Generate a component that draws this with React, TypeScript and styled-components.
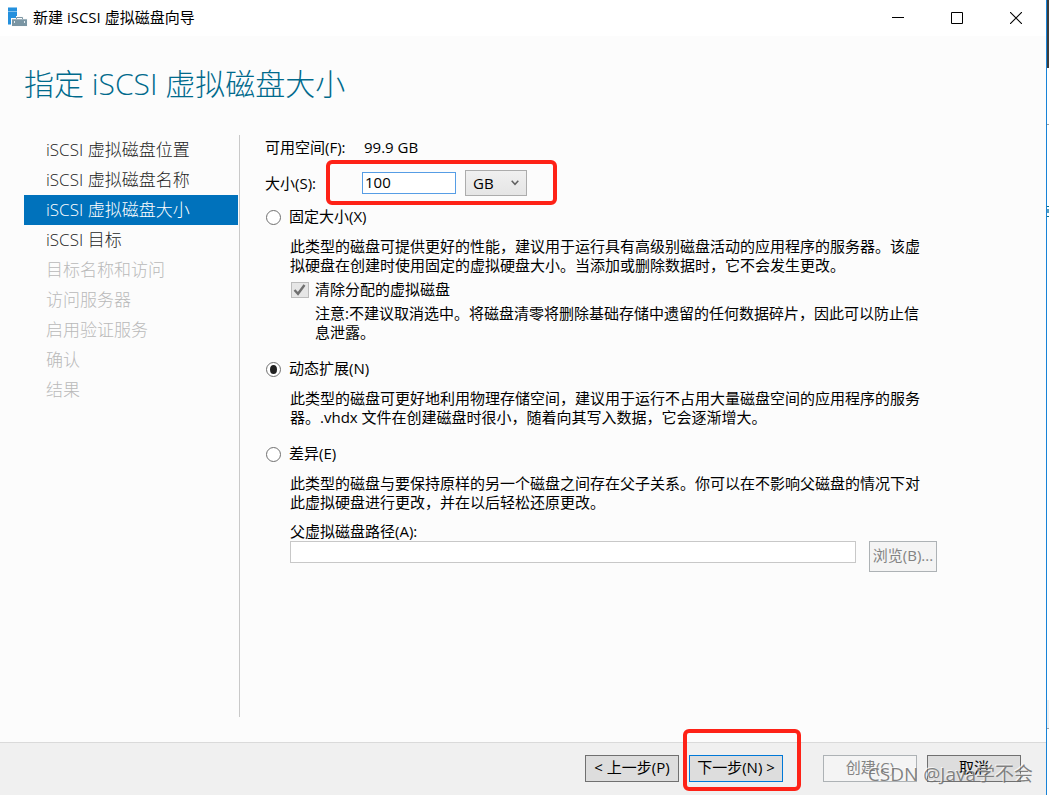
import React, { useState } from "react";
import styled, { createGlobalStyle, css } from "styled-components";

const GlobalStyle = createGlobalStyle`
  *, *::before, *::after { box-sizing: border-box; }
  body {
    margin: 0;
    background: #ffffff;
    color: #000000;
    font-family: "Open Sans", "Noto Sans CJK SC", sans-serif;
    font-size: 15px;
    line-height: 19px;
    text-spacing-trim: space-all;
    text-autospace: no-autospace;
  }
  button, input, select { font: inherit; color: inherit; margin: 0; }
`;

const Screen = styled.div`
  display: flex;
  min-height: 100vh;
`;

const Window = styled.div`
  flex: 1;
  min-width: 0;
  display: flex;
  flex-direction: column;
  background: #fcfcfc;
  border-right: 1px solid #1883d7;
`;

const Backdrop = styled.div`
  width: 2px;
  display: flex;
  flex-direction: column;
  background: #ffffff;
`;

const BackdropBar = styled.div<{ $height: number; $color: string }>`
  height: ${(p) => p.$height}px;
  background: ${(p) => p.$color};
`;

const TitleBar = styled.header`
  display: flex;
  align-items: center;
  height: 36px;
  padding: 0 1px 0 8px;
  background: #ffffff;
`;

const WindowTitle = styled.span`
  flex: 1;
  padding: 0 0 2px 5px;
`;

const CaptionButton = styled.button`
  display: flex;
  align-items: center;
  justify-content: center;
  width: 59px;
  height: 34px;
  padding: 0;
  border: 0;
  background: transparent;
`;

const Heading = styled.h1`
  margin: 0;
  padding: 28px 24px 31px;
  font-size: 30px;
  line-height: 40px;
  font-weight: 300;
  color: #006a8c;
`;

const Body = styled.div`
  flex: 1;
  display: flex;
  padding: 0 24px 25px;
`;

const Steps = styled.nav`
  flex: 0 0 216px;
  padding-right: 1px;
  border-right: 1px solid #c9c9c9;
`;

const StepList = styled.ol`
  margin: 0;
  padding: 0;
  list-style: none;
`;

const StepButton = styled.button<{ $current?: boolean }>`
  display: block;
  width: 100%;
  height: 30px;
  padding: 0 22px;
  border: 0;
  background: ${(p) => (p.$current ? "#0072bc" : "transparent")};
  color: ${(p) => (p.$current ? "#ffffff" : "#1e1e1e")};
  font-size: 17px;
  font-weight: 300;
  line-height: 28px;
  text-align: left;
  &:disabled { color: #b9b9b9; }
`;

const Form = styled.form`
  flex: 1;
  min-width: 0;
  max-width: 697px;
  padding: 2px 0 0 25px;
`;

const SpaceField = styled.div`
  display: flex;
  align-items: center;
  height: 20px;
`;

const SizeField = styled.div`
  position: relative;
  display: flex;
  align-items: center;
  height: 48px;
  margin-top: 2px;
`;

const FieldLabel = styled.label`
  width: 97px;
`;

const FieldName = styled.span`
  width: 99px;
`;

const SizeInput = styled.input`
  width: 94px;
  height: 22px;
  padding: 0 2px 2px;
  border: 1px solid #569de5;
  background: #ffffff;
  outline: 0;
`;

const UnitPicker = styled.div`
  display: grid;
  align-items: center;
  width: 62px;
  margin-left: 9px;
  & > * { grid-area: 1 / 1; }
  svg { justify-self: end; margin-right: 8px; pointer-events: none; }
`;

const UnitSelect = styled.select`
  appearance: none;
  width: 100%;
  height: 26px;
  padding: 0 7px;
  border: 1px solid #acacac;
  border-radius: 0;
  background: linear-gradient(#f0f0f0, #e5e5e5);
`;

const outline = css`
  position: absolute;
  border: 4px solid #fe2217;
  border-radius: 6px;
  pointer-events: none;
`;

const SizeMarker = styled.span`
  ${outline}
  inset: 1px auto 2px 61px;
  width: 231px;
`;

const NextMarker = styled.span`
  ${outline}
  inset: -26px -18px -9px -6px;
`;

const Option = styled.section`
  padding-bottom: 17px;
`;

const Choice = styled.label`
  display: flex;
  align-items: center;
  gap: 8px;
  height: 21px;
  padding-left: 1px;
`;

const ChoiceText = styled.span`
  padding-bottom: 2px;
`;

const Radio = styled.input`
  appearance: none;
  display: grid;
  place-items: center;
  width: 15px;
  height: 15px;
  border: 1px solid #707070;
  border-radius: 50%;
  background: #ffffff;
  &:checked::before {
    content: "";
    width: 7px;
    height: 9px;
    border-radius: 50%;
    background: #212121;
  }
`;

const Details = styled.div`
  padding: 9px 0 0 25px;
`;

const Text = styled.p`
  max-width: 632px;
  margin: 0;
`;

const CheckRow = styled.label`
  display: flex;
  align-items: center;
  gap: 6px;
  height: 29px;
  padding-left: 1px;
`;

const CheckControl = styled.span`
  display: grid;
  & > * { grid-area: 1 / 1; }
`;

const Checkbox = styled.input`
  appearance: none;
  width: 18px;
  height: 16px;
  border: 1px solid #bcbcbc;
  background: #e6e6e6;
`;

const Note = styled.p`
  max-width: 632px;
  margin: 0;
  padding-left: 25px;
`;

const PathLabel = styled.label`
  display: block;
  padding-top: 10px;
`;

const PathRow = styled.div`
  display: flex;
  align-items: flex-start;
  gap: 13px;
`;

const PathInput = styled.input`
  flex: 1;
  min-width: 0;
  height: 22px;
  border: 1px solid #c8c8c8;
  background: #ffffff;
`;

const Button = styled.button<{ $primary?: boolean }>`
  width: 94px;
  height: 27px;
  padding: 0 0 2px;
  border: 1px solid ${(p) => (p.$primary ? "#0078d7" : "#707070")};
  background: #dddddd;
  white-space: nowrap;
  &:disabled {
    border-color: #adb2b5;
    background: #f4f4f4;
    color: #838383;
  }
`;

const BrowseButton = styled(Button)`
  width: 68px;
  height: 31px;
`;

const Footer = styled.footer`
  position: relative;
  display: flex;
  align-items: flex-start;
  justify-content: flex-end;
  gap: 10px;
  height: 53px;
  padding: 12px 25px 0;
  border-top: 1px solid #dadada;
  background: #f0f0f0;
`;

const NextSlot = styled.div`
  position: relative;
  display: flex;
  margin-right: 30px;
`;

const Watermark = styled.span`
  position: absolute;
  right: 13px;
  bottom: 9px;
  font-size: 19px;
  line-height: 24px;
  color: rgba(110, 110, 110, 0.85);
  text-shadow: -1px -1px 0 rgba(255, 255, 255, 0.7);
  pointer-events: none;
`;

const steps = [
  { name: "iSCSI 虚拟磁盘位置", enabled: true },
  { name: "iSCSI 虚拟磁盘名称", enabled: true },
  { name: "iSCSI 虚拟磁盘大小", enabled: true },
  { name: "iSCSI 目标", enabled: true },
  { name: "目标名称和访问", enabled: false },
  { name: "访问服务器", enabled: false },
  { name: "启用验证服务", enabled: false },
  { name: "确认", enabled: false },
  { name: "结果", enabled: false },
];

const ServerIcon = () => (
  <svg width="20" height="22" viewBox="0 0 20 22" aria-hidden="true">
    <path d="M0 0h9v18H0z" fill="#2490dd" />
    <path d="M0 .5h9M0 17.500h9" stroke="#8cc6ef" />
    <path d="M0 4.500h9" stroke="#7fc0ee" />
    <path d="M3 11h5V9h8v2h4v9H3z" fill="#fcfcfc" />
    <path d="M8.500 12v-1.500h6V12" fill="none" stroke="#7e98a5" />
    <path d="M4 12h15v7H4z" fill="#7a95a3" />
    <path d="M4 12.500h15" stroke="#9fb3bd" />
    <path d="M6 14h1v2H6zM16 14h1v2h-1z" fill="#dfe9ee" />
  </svg>
);

export default function App() {
  const [type, setType] = useState("dynamic");
  const radio = (value: string) => ({
    type: "radio",
    name: "disk-type",
    checked: type === value,
    onChange: () => setType(value),
  });

  return (
    <Screen>
      <GlobalStyle />
      <Window>
        <TitleBar>
          <ServerIcon />
          <WindowTitle>新建 iSCSI 虚拟磁盘向导</WindowTitle>
          <CaptionButton aria-label="最小化">
            <svg width="12" height="12"><path d="M0 5.500h12" stroke="#000" /></svg>
          </CaptionButton>
          <CaptionButton aria-label="最大化">
            <svg width="12" height="12"><path d="M.5.5h11v11H.5z" fill="none" stroke="#000" /></svg>
          </CaptionButton>
          <CaptionButton aria-label="关闭">
            <svg width="12" height="12"><path d="M0 0l12 12M12 0L0 12" stroke="#000" strokeWidth="1.100" /></svg>
          </CaptionButton>
        </TitleBar>

        <Heading>指定 iSCSI 虚拟磁盘大小</Heading>

        <Body>
          <Steps>
            <StepList>
              {steps.map((step, i) => (
                <li key={step.name}>
                  <StepButton
                    type="button"
                    $current={i === 2}
                    aria-current={i === 2 ? "step" : undefined}
                    disabled={!step.enabled}
                  >
                    {step.name}
                  </StepButton>
                </li>
              ))}
            </StepList>
          </Steps>

          <Form onSubmit={(e) => e.preventDefault()}>
            <SpaceField>
              <FieldName>可用空间(F):</FieldName>
              <span>99.9 GB</span>
            </SpaceField>
            <SizeField>
              <FieldLabel htmlFor="size">大小(S):</FieldLabel>
              <SizeInput id="size" defaultValue="100" />
              <UnitPicker>
                <UnitSelect aria-label="单位" defaultValue="GB">
                  <option>MB</option>
                  <option>GB</option>
                  <option>TB</option>
                </UnitSelect>
                <svg width="8" height="6" aria-hidden="true">
                  <path d="M.7.8L4 4.300 7.300.8" fill="none" stroke="#606060" strokeWidth="1.500" />
                </svg>
              </UnitPicker>
              <SizeMarker />
            </SizeField>

            <Option>
              <Choice><Radio {...radio("fixed")} /><ChoiceText>固定大小(X)</ChoiceText></Choice>
              <Details>
                <Text>
                  此类型的磁盘可提供更好的性能，建议用于运行具有高级别磁盘活动的应用程序的服务器。该虚拟硬盘在创建时使用固定的虚拟硬盘大小。当添加或删除数据时，它不会发生更改。
                </Text>
                <CheckRow>
                  <CheckControl>
                    <Checkbox type="checkbox" defaultChecked disabled />
                    <svg width="18" height="16" aria-hidden="true">
                      <path d="M3.500 8L7 11.800 13.500 3" fill="none" stroke="#707070" strokeWidth="2.400" />
                    </svg>
                  </CheckControl>
                  清除分配的虚拟磁盘
                </CheckRow>
                <Note>
                  注意:不建议取消选中。将磁盘清零将删除基础存储中遗留的任何数据碎片，因此可以防止信息泄露。
                </Note>
              </Details>
            </Option>

            <Option>
              <Choice><Radio {...radio("dynamic")} /><ChoiceText>动态扩展(N)</ChoiceText></Choice>
              <Details>
                <Text>
                  此类型的磁盘可更好地利用物理存储空间，建议用于运行不占用大量磁盘空间的应用程序的服务器。.vhdx 文件在创建磁盘时很小，随着向其写入数据，它会逐渐增大。
                </Text>
              </Details>
            </Option>

            <Option>
              <Choice><Radio {...radio("differencing")} /><ChoiceText>差异(E)</ChoiceText></Choice>
              <Details>
                <Text>
                  此类型的磁盘与要保持原样的另一个磁盘之间存在父子关系。你可以在不影响父磁盘的情况下对此虚拟硬盘进行更改，并在以后轻松还原更改。
                </Text>
                <PathLabel htmlFor="parent">父虚拟磁盘路径(A):</PathLabel>
                <PathRow>
                  <PathInput id="parent" disabled />
                  <BrowseButton type="button" disabled>浏览(B)...</BrowseButton>
                </PathRow>
              </Details>
            </Option>
          </Form>
        </Body>

        <Footer>
          <Button type="button">&lt; 上一步(P)</Button>
          <NextSlot>
            <Button type="button" $primary>下一步(N) &gt;</Button>
            <NextMarker />
          </NextSlot>
          <Button type="button" disabled>创建(C)</Button>
          <Button type="button">取消</Button>
          <Watermark>CSDN @Java学不会</Watermark>
        </Footer>
      </Window>
      <Backdrop aria-hidden="true">
        <BackdropBar $height={68} $color="#3c3c3c" />
        <BackdropBar $height={56} $color="#ffffff" />
        <BackdropBar $height={1} $color="#a0a0a0" />
        <BackdropBar $height={81} $color="#ffffff" />
        <BackdropBar $height={1} $color="#0c7392" />
        <BackdropBar $height={2} $color="#ffffff" />
        <BackdropBar $height={4} $color="#5a9fc0" />
        <BackdropBar $height={3} $color="#ffffff" />
        <BackdropBar $height={1} $color="#0c7392" />
        <BackdropBar $height={483} $color="#ffffff" />
        <BackdropBar $height={28} $color="#f0f0f0" />
        <BackdropBar $height={1} $color="#a0a0a0" />
      </Backdrop>
    </Screen>
  );
}
